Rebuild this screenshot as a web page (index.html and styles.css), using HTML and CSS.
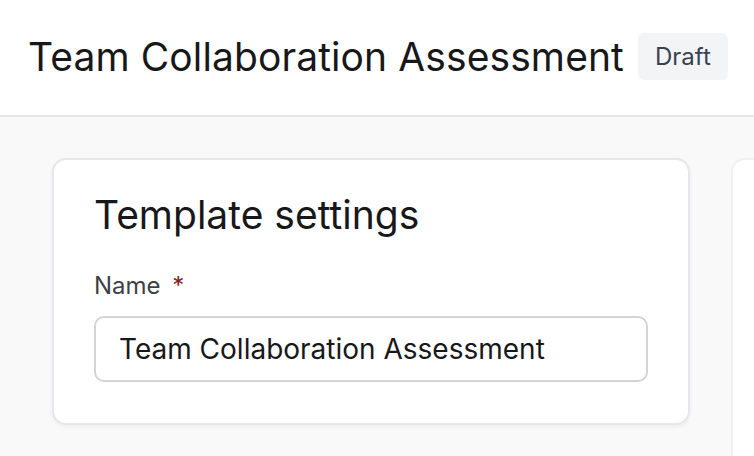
FILE: index.html
```html
<!DOCTYPE html>
<html lang="en">
<head>
  <meta charset="UTF-8">
  <title>Team Collaboration Assessment</title>
  <link rel="stylesheet" href="styles.css">
</head>
<body>

  <header class="page-header">
    <h1>Team Collaboration Assessment</h1>
    <span class="badge">Draft</span>
  </header>

  <main class="content">
    <section class="card">
      <h2>Template settings</h2>
      <label class="field-label" for="templateName">Name <span class="required">*</span></label>
      <input class="text-input" id="templateName" type="text" value="Team Collaboration Assessment">
    </section>
    <aside class="card side-card"></aside>
  </main>

</body>
</html>
```

FILE: styles.css
```css
html, body {
  height: 100%;
}

body {
  font-family: 'Inter', 'Noto Sans', sans-serif;
  background-color: #f9f9fa;
  margin: 0;
  padding: 0;
  color: #18181b;
  overflow: hidden;
  display: flex;
  flex-direction: column;
}

.page-header {
  flex: 0 0 auto;
  display: flex;
  align-items: center;
  gap: 14px;
  height: 117px;
  padding: 0 0 2px 28px;
  background-color: white;
  border-bottom: 2px solid #e5e7eb;
  box-sizing: border-box;
}

h1 {
  flex: 0 0 auto;
  margin: 0;
  font-size: 39px;
  font-weight: 400;
  letter-spacing: 0.1px;
  white-space: nowrap;
}

.badge {
  flex: 0 0 auto;
  background-color: #f3f4f6;
  color: #374151;
  font-size: 24px;
  line-height: 29px;
  padding: 9px 17px;
  border-radius: 6px;
}

.content {
  flex: 1 1 auto;
  min-height: 0;
  display: flex;
  align-items: flex-start;
  gap: 41px;
  padding: 41px 0 0 52px;
}

.card {
  flex: 0 0 auto;
  width: 638px;
  box-sizing: border-box;
  background-color: white;
  border: 2px solid #e5e7eb;
  border-radius: 14px;
  box-shadow: 0 2px 4px rgba(0, 0, 0, 0.05);
  padding: 31px 40px 41px;
}

.side-card {
  flex: 1 1 auto;
  width: auto;
  align-self: stretch;
  padding: 0;
  border-color: #f0f0f2;
  border-right: none;
  border-bottom: none;
  border-radius: 14px 0 0 0;
  box-shadow: none;
}

h2 {
  margin: 0 0 32px;
  font-size: 39px;
  line-height: 48px;
  font-weight: 400;
}

.field-label {
  display: block;
  font-size: 24px;
  line-height: 29px;
  color: #3f3f46;
  margin-bottom: 16px;
}

.required {
  color: #7f1d1d;
  margin-left: 5px;
}

.text-input {
  display: block;
  width: 100%;
  box-sizing: border-box;
  height: 66px;
  padding: 0 23px;
  font-family: inherit;
  font-size: 28px;
  color: #18181b;
  border: 2px solid #d4d4d8;
  border-radius: 10px;
}
```
